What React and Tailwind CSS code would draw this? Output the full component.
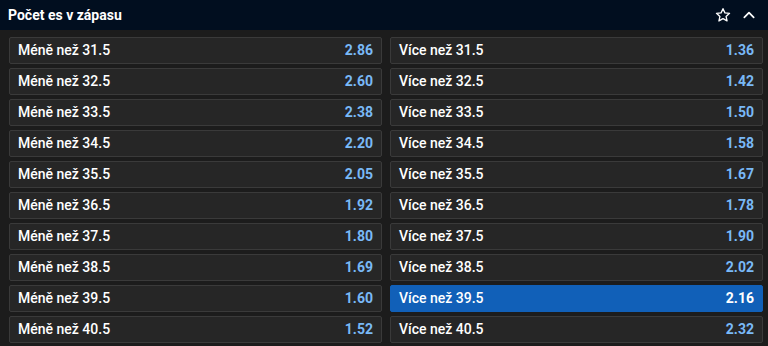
import React from "react";

const rows = [
  ["31.5", "2.86", "1.36"],
  ["32.5", "2.60", "1.42"],
  ["33.5", "2.38", "1.50"],
  ["34.5", "2.20", "1.58"],
  ["35.5", "2.05", "1.67"],
  ["36.5", "1.92", "1.78"],
  ["37.5", "1.80", "1.90"],
  ["38.5", "1.69", "2.02"],
  ["39.5", "1.60", "2.16"],
  ["40.5", "1.52", "2.32"],
];

const OddsCell = ({ label, odds, selected }) => (
  <div
    className={
      selected
        ? "flex h-[27px] items-center justify-between rounded-[2px] border border-[#1160b8] bg-[#1160b8] pl-[8px] pr-[8px]"
        : "flex h-[27px] items-center justify-between rounded-[2px] border border-[#3a3a3a] bg-[#262626] pl-[8px] pr-[8px]"
    }
  >
    <span className="text-[14px] font-medium text-white">{label}</span>
    <span
      className={
        selected
          ? "text-[14px] font-bold text-white"
          : "text-[14px] font-bold text-[#79b9f7]"
      }
    >
      {odds}
    </span>
  </div>
);

export default function App() {
  return (
    <div className="h-[346px] w-[768px] overflow-hidden bg-[#1c1c1c] font-['Roboto','Liberation_Sans',sans-serif]">
      {/* header */}
      <div className="flex h-[30px] items-center justify-between bg-[#010e1f] pl-[8px] pr-[12px]">
        <h2 className="text-[14px] font-bold text-white">Počet es v zápasu</h2>
        <div className="flex items-center gap-[11px]">
          <svg width="16" height="16" viewBox="0 0 24 24" fill="none" stroke="white" strokeWidth="2" strokeLinejoin="round">
            <path d="M12 2.5l2.9 6.3 6.9.7-5.2 4.6 1.5 6.8L12 17.4l-6.1 3.5 1.5-6.8-5.2-4.6 6.9-.7z" />
          </svg>
          <svg width="14" height="14" viewBox="0 0 24 24" fill="none" stroke="white" strokeWidth="3" strokeLinecap="round" strokeLinejoin="round">
            <path d="M4 16l8-8 8 8" />
          </svg>
        </div>
      </div>

      {/* odds grid */}
      <div className="grid grid-cols-2 gap-x-[8px] gap-y-[4px] pl-[9px] pr-[5px] pt-[7px]">
        {rows.map(([line, under, over]) => (
          <React.Fragment key={line}>
            <OddsCell label={`Méně než ${line}`} odds={under} />
            <OddsCell label={`Více než ${line}`} odds={over} selected={line === "39.5"} />
          </React.Fragment>
        ))}
      </div>
    </div>
  );
}
